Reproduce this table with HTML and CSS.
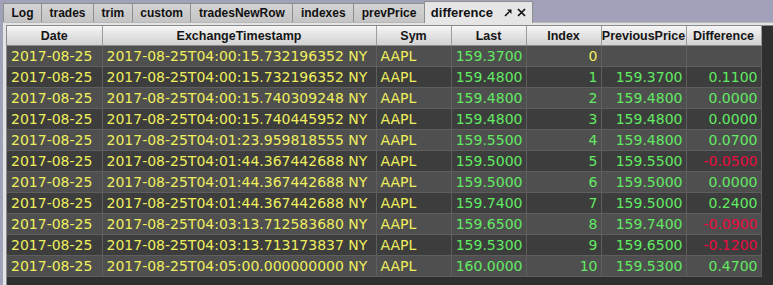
FILE: index.html
```html
<!DOCTYPE html>
<html lang="en">
<head>
  <meta charset="UTF-8" />
  <title>difference</title>
  <link rel="stylesheet" href="styles.css">
</head>
<body>

  <div class="tab-strip">
    <div class="tab">Log</div>
    <div class="tab">trades</div>
    <div class="tab">trim</div>
    <div class="tab">custom</div>
    <div class="tab">tradesNewRow</div>
    <div class="tab">indexes</div>
    <div class="tab">prevPrice</div>
    <div class="tab active">
      difference
      <svg class="tab-icon" width="8" height="8" viewBox="0 0 8 8">
        <path d="M1 7 L5 3" stroke="#111" stroke-width="1.6" fill="none"/>
        <path d="M3 0.5 L7.5 0.5 L7.5 5 Z" fill="#111"/>
      </svg>
      <svg class="tab-icon close" width="9" height="9" viewBox="0 0 9 9">
        <path d="M1 1 L8 8 M8 1 L1 8" stroke="#111" stroke-width="1.7" fill="none"/>
      </svg>
    </div>
  </div>

  <div class="panel">
    <div class="viewport">
      <table class="grid">
        <colgroup>
          <col style="width:95px">
          <col style="width:274px">
          <col style="width:75px">
          <col style="width:75px">
          <col style="width:75px">
          <col style="width:85px">
          <col style="width:75px">
        </colgroup>
        <thead>
          <tr>
            <th>Date</th>
            <th>ExchangeTimestamp</th>
            <th>Sym</th>
            <th>Last</th>
            <th>Index</th>
            <th>PreviousPrice</th>
            <th>Difference</th>
          </tr>
        </thead>
        <tbody id="rows"></tbody>
      </table>
    </div>
  </div>

  <script>
    const data = [
      ['04:00:15.732196352', '159.3700', 0, '', ''],
      ['04:00:15.732196352', '159.4800', 1, '159.3700', '0.1100'],
      ['04:00:15.740309248', '159.4800', 2, '159.4800', '0.0000'],
      ['04:00:15.740445952', '159.4800', 3, '159.4800', '0.0000'],
      ['04:01:23.959818555', '159.5500', 4, '159.4800', '0.0700'],
      ['04:01:44.367442688', '159.5000', 5, '159.5500', '-0.0500'],
      ['04:01:44.367442688', '159.5000', 6, '159.5000', '0.0000'],
      ['04:01:44.367442688', '159.7400', 7, '159.5000', '0.2400'],
      ['04:03:13.712583680', '159.6500', 8, '159.7400', '-0.0900'],
      ['04:03:13.713173837', '159.5300', 9, '159.6500', '-0.1200'],
      ['04:05:00.000000000', '160.0000', 10, '159.5300', '0.4700']
    ];

    const body = document.getElementById('rows');
    data.forEach(([time, last, idx, prev, diff]) => {
      const tr = document.createElement('tr');
      const diffClass = diff.startsWith('-') ? 'neg' : 'num';
      tr.innerHTML =
        '<td class="txt">2017-08-25</td>' +
        '<td class="txt">2017-08-25T' + time + ' NY</td>' +
        '<td class="txt">AAPL</td>' +
        '<td class="num">' + last + '</td>' +
        '<td class="' + (idx === 0 ? 'txt' : 'num') + ' right">' + idx + '</td>' +
        '<td class="num">' + prev + '</td>' +
        '<td class="' + diffClass + '">' + diff + '</td>';
      body.appendChild(tr);
    });
  </script>
</body>
</html>
```

FILE: styles.css
```css
html, body {
  margin: 0;
  padding: 0;
  height: 100%;
  background: #a1a1b9;
  overflow: hidden;
}

.tab-strip {
  display: flex;
  align-items: flex-end;
  height: 22px;
  padding-left: 3px;
}

.tab {
  display: flex;
  align-items: center;
  height: 18px;
  padding: 0 7.5px;
  background: linear-gradient(#d4d4d4, #c4c4c4);
  border: 1px solid #8e8e8e;
  border-bottom: none;
  border-right: none;
  font-family: "Liberation Sans", Arial, sans-serif;
  font-weight: bold;
  font-size: 12px;
  color: #111;
}

.tab.active {
  height: 21px;
  margin-bottom: -1px;
  padding: 0 6px;
  font-size: 13px;
  background: #e6e6e6;
  border-right: 1px solid #8e8e8e;
  position: relative;
  z-index: 1;
}

.tab-icon {
  margin-left: 11px;
}

.tab-icon.close {
  margin-left: 5px;
}

.panel {
  margin-left: 3px;
  padding: 2px 0 0 3px;
  height: calc(100% - 24px);
  background: #e4e4e4;
  border-top: 1px solid #b8b8b8;
}

.viewport {
  height: 100%;
  background: #2f2f2f;
  border-top: 1px solid #8a8a8a;
  border-left: 1px solid #8a8a8a;
}

.grid {
  border-collapse: collapse;
  table-layout: fixed;
  width: 754px;
}

.grid th {
  height: 19px;
  padding: 0;
  background: linear-gradient(#f6f6f6, #e2e2e2 50%, #d2d2d2);
  border-right: 1px solid #9c9c9c;
  border-bottom: 1px solid #8a8a8a;
  font-family: "Liberation Sans", Arial, sans-serif;
  font-weight: bold;
  font-size: 12.5px;
  color: #151515;
  text-align: center;
  white-space: nowrap;
  overflow: hidden;
}

.grid td {
  height: 20px;
  padding: 0 3px 0 4px;
  border-right: 1px solid #5e5e5e;
  border-bottom: 1px solid #5e5e5e;
  font-family: "DejaVu Sans", Verdana, sans-serif;
  font-size: 14px;
  line-height: 20px;
  white-space: nowrap;
  overflow: hidden;
}

.grid tbody tr:nth-child(odd) td {
  background: #4f4f4f;
}

.grid tbody tr:nth-child(even) td {
  background: #3d3d3d;
}

.txt {
  color: #efef5e;
}

.num {
  color: #62ea62;
  text-align: right;
}

.neg {
  color: #ea0a40;
  text-align: right;
}

.right {
  text-align: right;
}
```
